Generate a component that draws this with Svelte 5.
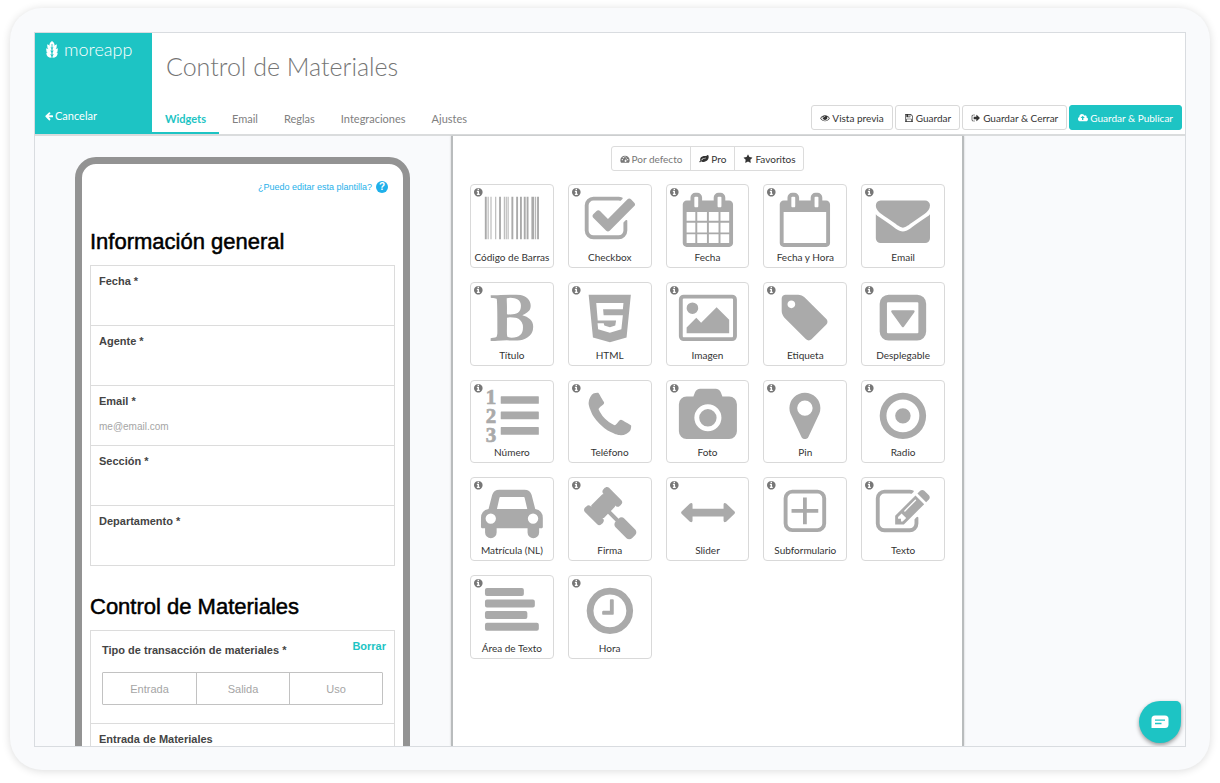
<script>
  const tabs = ['Widgets', 'Email', 'Reglas', 'Integraciones', 'Ajustes'];
  let activeTab = $state('Widgets');

  const glyphs = {
    eye: 'M1664 960q-152-236-381-353 61 104 61 225 0 185-131.5 316.5t-316.5 131.5-316.5-131.5-131.5-316.5q0-121 61-225-229 117-381 353 133 205 333.5 326.5t434.5 121.5 434.5-121.5 333.5-326.5zm-720-384q0-20-14-34t-34-14q-125 0-214.5 89.5t-89.5 214.5q0 20 14 34t34 14 34-14 14-34q0-86 61-147t147-61q20 0 34-14t14-34zm848 384q0 34-20 69-140 230-376.5 368.5t-499.5 138.5-499.5-139-376.5-368q-20-35-20-69t20-69q140-229 376.5-368t499.5-139 499.5 139 376.5 368q20 35 20 69z',
    save: 'M512 1536h768v-384h-768v384zm896 0h128v-896q0-14-10-38.5t-20-34.5l-281-281q-10-10-34-20t-39-10v416q0 40-28 68t-68 28h-576q-40 0-68-28t-28-68v-416h-128v1280h128v-416q0-40 28-68t68-28h832q40 0 68 28t28 68v416zm-384-928v-320q0-13-9.5-22.5t-22.5-9.5h-192q-13 0-22.5 9.5t-9.5 22.5v320q0 13 9.5 22.5t22.5 9.5h192q13 0 22.5-9.5t9.5-22.5zm640 32v928q0 40-28 68t-68 28h-1344q-40 0-68-28t-28-68v-1344q0-40 28-68t68-28h928q40 0 88 20t76 48l280 280q28 28 48 76t20 88z',
    exit: 'M704 1440q0 4 1 20t.5 26.5-3 23.5-10 19.5-20.5 6.5h-320q-119 0-203.5-84.5t-84.5-203.5v-704q0-119 84.5-203.5t203.5-84.5h320q13 0 22.5 9.5t9.5 22.5q0 4 1 20t.5 26.5-3 23.5-10 19.5-20.5 6.5h-320q-66 0-113 47t-47 113v704q0 66 47 113t113 47h312l11.5 1 11.5 3 8 5.5 7 9 2 13.5zm928-544q0 26-19 45l-544 544q-19 19-45 19t-45-19-19-45v-288h-448q-26 0-45-19t-19-45v-384q0-26 19-45t45-19h448v-288q0-26 19-45t45-19 45 19l544 544q19 19 19 45z',
    cloud: 'M1216 864q0-14-9-23l-352-352q-9-9-23-9t-23 9l-351 351q-10 12-10 24 0 14 9 23t23 9h224v352q0 13 9.5 22.5t22.5 9.5h192q13 0 22.5-9.5t9.5-22.5v-352h224q13 0 22.5-9.5t9.5-22.5zm640 288q0 159-112.5 271.5t-271.5 112.5h-1088q-185 0-316.5-131.5t-131.5-316.5q0-130 70-240t188-165q-2-30-2-43 0-212 150-362t362-150q156 0 285.5 87t188.5 231q71-62 166-62 106 0 181 75t75 181q0 76-41 138 130 31 213.5 135.5t83.5 238.5z',
    star: 'M1728 647q0 22-26 48l-363 354 86 500q1 7 1 20 0 21-10.5 35.5t-30.5 14.5q-19 0-40-12l-449-236-449 236q-22 12-40 12-21 0-31.5-14.5t-10.5-35.5q0-6 2-20l86-500-364-354q-25-27-25-48 0-37 56-46l502-73 225-455q19-41 49-41t49 41l225 455 502 73q56 9 56 46z',
    back: 'M1664 896v128q0 53-32.5 90.5t-84.5 37.5h-704l293 294q38 36 38 90t-38 90l-75 76q-37 37-90 37-52 0-91-37l-651-652q-37-37-37-90 0-52 37-91l651-650q38-38 91-38 52 0 90 38l75 74q38 38 38 91t-38 91l-293 293h704q52 0 84.5 37.5t32.5 90.5z',
    leaf: 'M1280 704q0-26-19-45t-45-19q-172 0-318 49.5t-259.5 134-235.5 219.5q-19 21-19 45 0 26 19 45t45 19q24 0 45-19 27-24 74-71t67-66q137-124 268.5-176t313.5-52q26 0 45-19t19-45zm512-198q0 95-20 193-46 224-184.5 383t-357.5 268q-214 108-438 108-148 0-286-47-15-5-88-42t-96-37q-16 0-39.5 32t-45 70-52.5 70-60 32q-43 0-63.5-17.5t-45.5-59.5q-2-4-6-11t-5.5-10-3-9.5-1.5-13.5q0-35 31-73.5t68-65.5 68-56 31-48q0-4-14-38t-16-44q-9-51-9-104 0-115 43.5-220t119-184.5 170.5-139 204-95.5q55-18 145-25.5t179.5-9 178.5-6 163.5-24 113.5-56.5l29.5-29.5 29.5-28 27-20 36.5-16 43.5-4.5q39 0 70.5 46t47.5 112 24 124 8 96z',
    gauge: 'M0 1152a896 896 0 0 1 1792 0q0 250-130 450-20 30-60 30H190q-40 0-60-30Q0 1402 0 1152zM256 1024a128 128 0 1 0 256 0a128 128 0 1 0-256 0zM448 640a128 128 0 1 0 256 0a128 128 0 1 0-256 0zM768 480a128 128 0 1 0 256 0a128 128 0 1 0-256 0zM1280 1024a128 128 0 1 0 256 0a128 128 0 1 0-256 0zM1130 600l-130 480a190 190 0 1 0 95 25l130-480z',
    info: 'M1152 1376v-160q0-14-9-23t-23-9h-96v-512q0-14-9-23t-23-9h-320q-14 0-23 9t-9 23v160q0 14 9 23t23 9h96v320h-96q-14 0-23 9t-9 23v160q0 14 9 23t23 9h448q14 0 23-9t9-23zm-128-896v-160q0-14-9-23t-23-9h-192q-14 0-23 9t-9 23v160q0 14 9 23t23 9h192q14 0 23-9t9-23zm640 416q0 209-103 385.5t-279.5 279.5-385.5 103-385.5-103-279.5-279.5-103-385.5 103-385.5 279.5-279.5 385.5-103 385.5 103 279.5 279.5 103 385.5z'
  };

  const calendarFrame =
    'M576 448v-288q0-13-9.5-22.5t-22.5-9.5h-64q-13 0-22.5 9.5t-9.5 22.5v288q0 13 9.5 22.5t22.5 9.5h64q13 0 22.5-9.5t9.5-22.5zM1344 448v-288q0-13-9.5-22.5t-22.5-9.5h-64q-13 0-22.5 9.5t-9.5 22.5v288q0 13 9.5 22.5t22.5 9.5h64q13 0 22.5-9.5t9.5-22.5zM1728 384v1280q0 52-38 90t-90 38h-1408q-52 0-90-38t-38-90v-1280q0-52 38-90t90-38h128v-96q0-66 47-113t113-47h64q66 0 113 47t47 113v96h384v-96q0-66 47-113t113-47h64q66 0 113 47t47 113v96h128q52 0 90 38t38 90z';

  // "glyph" paths use the 1792-unit icon grid, "shape" paths the 84-unit tile grid.
  const widgets = [
    { name: 'Código de Barras', glyph: 'M63 1536h-63v-1408h63v1408zM126 1535h-32v-1407h31v1407zM220 1535h-31v-1407h31v1407zM377 1535h-31v-1407h31v1407zM534 1535h-62v-1407h62v1407zM660 1535h-31v-1407h31v1407zM723 1535h-31v-1407h31v1407zM786 1535h-31v-1407h31v1407zM943 1535h-63v-1407h63v1407zM1100 1535h-63v-1407h63v1407zM1226 1535h-63v-1407h63v1407zM1352 1535h-63v-1407h63v1407zM1446 1535h-63v-1407h63v1407zM1635 1535h-94v-1407h94v1407zM1698 1535h-32v-1407h32v1407zM1792 1535h-63v-1407h63v1407z' },
    { name: 'Checkbox', glyph: 'M1472 930v318q0 119-84.5 203.5t-203.5 84.5h-832q-119 0-203.5-84.5t-84.5-203.5v-832q0-119 84.5-203.5t203.5-84.5h832q63 0 117 25 15 7 18 23 3 17-9 29l-49 49q-10 10-23 10-3 0-9-2-23-6-45-6h-832q-66 0-113 47t-47 113v832q0 66 47 113t113 47h832q66 0 113-47t47-113v-254q0-13 9-22l64-64q10-10 23-10 6 0 12 3 20 8 20 29zm231-489l-814 814q-24 24-57 24t-57-24l-430-430q-24-24-24-57t24-57l110-110q24-24 57-24t57 24l263 263 647-647q24-24 57-24t57 24l110 110q24 24 24 57t-24 57z' },
    { name: 'Fecha', glyph: 'M192 1664h288v-288h-288v288zM544 1664h320v-288h-320v288zM192 1312h288v-320h-288v320zM544 1312h320v-320h-320v320zM192 928h288v-288h-288v288zM928 1664h320v-288h-320v288zM544 928h320v-288h-320v288zM1312 1664h288v-288h-288v288zM928 1312h320v-320h-320v320zM1312 1312h288v-320h-288v320zM928 928h320v-288h-320v288zM1312 928h288v-288h-288v288z' + calendarFrame },
    { name: 'Fecha y Hora', glyph: 'M192 1664h1408v-1024h-1408v1024z' + calendarFrame },
    { name: 'Email', glyph: 'M1792 710v794q0 66-47 113t-113 47h-1472q-66 0-113-47t-47-113v-794q44 49 101 87 362 246 497 345 57 42 92.5 65.5t94.5 48 110 24.5h2q51 0 110-24.5t94.5-48 92.5-65.5q170-123 498-345 57-39 100-87zm0-294q0 79-49 151t-122 123q-376 261-468 325-10 7-42.5 31t-54 38.5-52 32.5-57.5 27-50 9h-2q-23 0-50-9t-57.5-27-52-32.5-54-38.5-42.5-31q-91-64-262-182.5t-205-142.5q-62-42-117-115.5t-55-136.5q0-78 41.5-130t118.5-52h1472q65 0 112.5 47t47.5 113z' },
    { name: 'Título', glyph: 'M747 1521q74 32 140 32 376 0 376-335 0-114-41-180-27-44-61.5-74t-67.5-46.5-80.5-25-84-10.5-94.5-2q-73 0-101 10 0 53-.5 159t-.5 158q0 8-1 67.5t-.5 96.5 4.5 83.5 12 66.5zm-14-746q42 7 109 7 82 0 143-13t110-44.5 74.5-89.5 25.5-142q0-70-29-122.5t-79-82-108-43.5-124-14q-50 0-130 13 0 50 4 151t4 152q0 27-.5 80t-.5 79q0 46 1 69zm-541 889l2-94q15-4 85-16t106-27q7-12 12.5-27t8.5-33.5 5.5-32.5 3-37.5.5-34v-65.5q0-982-22-1025-4-8-22-14.5t-44.5-11-49.5-7-48.5-4.5-30.5-3l-4-83q98-2 340-11.5t373-9.5q23 0 68 .5t68 .5q70 0 136.5 13t128.5 42 108 71 74 104.5 28 137.5q0 52-16.5 95.5t-39 72-64.5 57.5-73 45-84 40q154 35 256.5 134t102.5 248q0 100-35 179.5t-93.5 130.5-138 85.5-163.5 48.5-176 14q-44 0-132-3t-132-3q-106 0-307 11t-231 12z' },
    { name: 'HTML', shape: 'M20.7 12.7H63L58.7 55.7L42 60.3L25 55.7ZM28.3 21L29.8 38.6H48.2L47.4 43.7L42 45.3L36.4 43.7L35.8 41.300H29.6L30.2 47.3L42 51L53.5 47.3L55 33.3H35.7L35.2 27.3H55L55.6 21Z' },
    { name: 'Imagen', glyph: 'M576 576q0 80-56 136t-136 56-136-56-56-136 56-136 136-56 136 56 56 136zm1024 384v448h-1408v-192l320-320 160 160 512-512zm96-704h-1600q-13 0-22.5 9.5t-9.5 22.5v1216q0 13 9.5 22.5t22.5 9.5h1600q13 0 22.5-9.5t9.5-22.5v-1216q0-13-9.5-22.5t-22.5-9.5zm160 32v1216q0 66-47 113t-113 47h-1600q-66 0-113-47t-47-113v-1216q0-66 47-113t113-47h1600q66 0 113 47t47 113z' },
    { name: 'Etiqueta', glyph: 'M576 448q0-53-37.5-90.5t-90.5-37.5-90.5 37.5-37.5 90.5 37.5 90.5 90.5 37.5 90.5-37.5 37.5-90.5zm1067 576q0 53-37 90l-491 492q-39 37-91 37-53 0-90-37l-715-716q-38-37-64.5-101t-26.5-117v-416q0-52 38-90t90-38h416q53 0 117 26.5t102 64.5l715 714q37 39 37 91z' },
    { name: 'Desplegable', shape: 'M27.700 12.700H56.300A9 9 0 0 1 65.300 21.700V49.700A9 9 0 0 1 56.300 58.700H27.700A9 9 0 0 1 18.700 49.700V21.700A9 9 0 0 1 27.700 12.700ZM27 20.300Q26 20.300 26 21.300V50.300Q26 51.300 27 51.300H56.500Q57.500 51.300 57.500 50.300V21.300Q57.500 20.300 56.500 20.300ZM31.500 28.200H52.500Q54.600 28.400 53.300 30.500L43 44.800Q42 46 41 44.800L30.700 30.500Q29.400 28.400 31.500 28.200Z' },
    { name: 'Número', shape: 'M31.400 16.200H68.400Q69 16.200 69 16.800V23.300Q69 23.900 68.400 23.900H31.400Q30.800 23.900 30.800 23.300V16.800Q30.800 16.200 31.400 16.200ZM31.400 31.700H68.400Q69 31.700 69 32.300V38.800Q69 39.400 68.400 39.400H31.400Q30.800 39.400 30.800 38.800V32.300Q30.800 31.700 31.400 31.700ZM31.400 47.200H68.400Q69 47.200 69 47.800V54.300Q69 54.900 68.400 54.900H31.400Q30.800 54.900 30.800 54.300V47.800Q30.800 47.200 31.400 47.200Z', digits: true },
    { name: 'Teléfono', glyph: 'M1600 1240q0 27-10 70.5t-21 68.5q-21 50-122 106-94 51-186 51-27 0-53-3.5t-57.5-12.5-47-14.5-55.5-20.5-49-18q-98-35-175-83-127-79-264-216t-216-264q-48-77-83-175-3-9-18-49t-20.5-55.5-14.5-47-12.5-57.5-3.5-53q0-92 51-186 56-101 106-122 25-11 68.5-21t70.5-10q14 0 21 3 18 6 53 76 11 19 30 54t35 63.5 31 53.5q3 4 17.5 25t21.5 35.5 7 28.5q0 20-28.5 50t-62 55-62 53-28.5 46q0 9 5 22.5t8.5 20.5 14 24 11.5 19q76 137 174 235t235 174q2 1 19 11.5t24 14 20.5 8.5 22.5 5q18 0 46-28.5t53-62 55-62 50-28.5q14 0 28.5 7t35.5 21.5 25 17.5q25 15 53.5 31t63.5 35 54 30q70 35 76 53 3 7 3 21z' },
    { name: 'Foto', glyph: 'M896 672q119 0 203.5 84.5t84.5 203.5-84.5 203.5-203.5 84.500-203.500-84.500-84.500-203.500 84.500-203.500 203.500-84.500zm704-416q106 0 181 75t75 181v896q0 106-75 181t-181 75h-1408q-106 0-181-75t-75-181v-896q0-106 75-181t181-75h224l51-136q19-49 69.500-84.500t103.500-35.500h512q53 0 103.500 35.500t69.500 84.500l51 136h224zm-704 1152q185 0 316.500-131.500t131.500-316.500-131.500-316.500-316.500-131.500-316.500 131.500-131.500 316.500 131.500 316.500 316.500 131.500z' },
    { name: 'Pin', glyph: 'M1152 640q0-106-75-181t-181-75-181 75-75 181 75 181 181 75 181-75 75-181zm256 0q0 109-33 179l-364 774q-16 33-47.500 52t-67.500 19-67.500-19-46.500-52l-365-774q-33-70-33-179 0-212 150-362t362-150 362 150 150 362z' },
    { name: 'Radio', glyph: 'M128 896a768 768 0 1 0 1536 0a768 768 0 1 0-1536 0zM352 896a544 544 0 1 0 1088 0a544 544 0 1 0-1088 0zM640 896a256 256 0 1 0 512 0a256 256 0 1 0-512 0z' },
    { name: 'Matrícula (NL)', shape: 'M18.600 32L22.200 18Q23.800 12.800 29.500 12.800H54.500Q60.200 12.800 61.800 18L65.400 32Q73 33.500 73 41V50.200Q73 51.300 72 51.300H69.300V55.600A5.800 5.800 0 0 1 57.700 55.600V51.300H26.700V55.600A5.800 5.800 0 0 1 15.100 55.600V51.300H12Q11 51.300 11 50.200V41Q11 33.500 18.600 32ZM29.600 20.500L27 32H57.400L54.700 20.500Q54.500 20 54 20H30.300Q29.800 20 29.600 20.500ZM15.600 41.700a5.200 5.200 0 1 0 10.400 0a5.200 5.200 0 1 0-10.400 0ZM58 41.700a5.200 5.200 0 1 0 10.400 0a5.200 5.200 0 1 0-10.400 0Z' },
    { name: 'Firma', glyph: 'M1771 1536q0 53-37 90l-107 108q-39 37-91 37-53 0-90-37l-363-364q-38-36-38-90 0-53 43-96l-256-256-126 126q-14 14-34 14t-34-14q2 2 12.500 12t12.500 13 10 11.500 10 13.500 6 13.500 5.500 16.500 1.500 18q0 38-28 68-3 3-16.500 18t-19 20.500-18.500 16.500-22 15.500-22 9-26 4.500q-40 0-68-28l-408-408q-28-28-28-68 0-13 4.500-26t9-22 15.500-22 16.500-18.500 20.500-19 18-16.500q30-28 68-28 10 0 18 1.500t16.500 5.500 13.500 6 13.500 10 11.500 10 13 12.500 12 12.500q-14-14-14-34t14-34l348-348q14-14 34-14t34 14q-2-2-12.500-12t-12.500-13-10-11.500-10-13.500-6-13.500-5.500-16.500-1.500-18q0-38 28-68 3-3 16.500-18t19-20.500 18.500-16.500 22-15.500 22-9 26-4.500q40 0 68 28l408 408q28 28 28 68 0 13-4.500 26t-9 22-15.500 22-16.500 18.500-20.500 19-18 16.500q-30 28-68 28-10 0-18-1.500t-16.500-5.500-13.500-6-13.500-10-11.500-10-13-12.500-12-12.500q14 14 14 34t-14 34l-126 126 256 256q43-43 96-43 52 0 91 37l363 363q37 39 37 91z' },
    { name: 'Slider', shape: 'M15.600 34.600L24 26.500Q26.400 25.300 26.600 27.500V31.800H57.700V27.500Q58 25.300 60.300 26.500L68.700 34.600Q69.600 35.700 68.700 36.800L60.300 44.900Q58 46.100 57.700 43.900V39.600H26.600V43.900Q26.400 46.100 24 44.900L15.600 36.800Q14.700 35.700 15.600 34.600Z' },
    { name: 'Subformulario', shape: 'M29.400 12.700H54.600A8.700 8.700 0 0 1 63.300 21.400V46.500A8.700 8.700 0 0 1 54.600 55.200H29.400A8.700 8.700 0 0 1 20.700 46.500V21.400A8.700 8.700 0 0 1 29.400 12.700ZM29.400 16.600A4.800 4.800 0 0 0 24.600 21.400V46.500A4.800 4.800 0 0 0 29.400 51.300H54.600A4.800 4.800 0 0 0 59.400 46.500V21.400A4.800 4.800 0 0 0 54.600 16.600ZM40.100 20.600H43.900V32H55.400V35.900H43.900V47.400H40.100V35.900H28.600V32H40.100Z' },
    { name: 'Texto', glyph: 'M888 1184l116-116-152-152-116 116v56h96v96h56zm440-720q-16-16-33 1l-350 350q-17 17-1 33t33-1l350-350q17-17 1-33zm80 594v190q0 119-84.500 203.500t-203.500 84.500h-832q-119 0-203.500-84.500t-84.500-203.500v-832q0-119 84.500-203.500t203.500-84.500h832q63 0 117 25 15 7 18 23 3 17-9 29l-49 49q-14 14-32 8-23-6-45-6h-832q-66 0-113 47t-47 113v832q0 66 47 113t113 47h832q66 0 113-47t47-113v-126q0-13 9-22l64-64q15-15 35-7t20 29zm-96-738l288 288-672 672h-288v-288zm444 132l-92 92-288-288 92-92q28-28 68-28t68 28l152 152q28 28 28 68t-28 68z' },
    { name: 'Área de Texto', shape: 'M17 13h35q2 0 2 2v4q0 2-2 2h-35q-2 0-2-2v-4q0-2 2-2ZM17 24.600h46q2 0 2 2v4q0 2-2 2h-46q-2 0-2-2v-4q0-2 2-2ZM17 36.200h38.500q2 0 2 2v4q0 2-2 2h-38.500q-2 0-2-2v-4q0-2 2-2ZM17 47.800h50q2 0 2 2v4q0 2-2 2h-50q-2 0-2-2v-4q0-2 2-2Z' },
    { name: 'Hora', glyph: 'M1024 544v448q0 14-9 23t-23 9h-320q-14 0-23-9t-9-23v-64q0-14 9-23t23-9h224v-352q0-14 9-23t23-9h64q14 0 23 9t9 23zm416 352q0-148-73-273t-198-198-273-73-273 73-198 198-73 273 73 273 198 198 273 73 273-73 198-198 73-273zm224 0q0 209-103 385.500t-279.500 279.500-385.500 103-385.500-103-279.500-279.500-103-385.500 103-385.500 279.500-279.500 385.500-103 385.500 103 279.500 279.500 103 385.500z' }
  ];

  const fields = [
    { id: 'fecha', label: 'Fecha *' },
    { id: 'agente', label: 'Agente *' },
    { id: 'email', label: 'Email *', hint: 'me@email.com' },
    { id: 'seccion', label: 'Sección *' },
    { id: 'departamento', label: 'Departamento *' }
  ];
  const choices = ['Entrada', 'Salida', 'Uso'];
  let choice = $state('');
</script>

{#snippet icon(name)}
  <svg class="icon" viewBox="-64 0 1920 1792" aria-hidden="true"><path fill-rule="evenodd" d={glyphs[name]} /></svg>
{/snippet}

<div class="page">
  <div class="card">
    <div class="frame">
      <header>
        <div class="brand">
          <a class="logo" href="#inicio">
            <svg viewBox="0 0 12 17" aria-hidden="true">
              <path d="M6 0Q9.500 2.400 8.200 5L6.400 6.800V3H5.600V6.800L3.800 5Q2.500 2.400 6 0ZM1.300 3.200Q5.600 5 5.600 9.800Q.6 9 1.300 3.200ZM10.700 3.200Q6.400 5 6.400 9.800Q11.400 9 10.700 3.200ZM.3 7.200Q5.600 8.600 5.600 13.500Q-.5 13 .3 7.200ZM11.700 7.200Q6.400 8.600 6.400 13.500Q12.500 13 11.700 7.200ZM.3 11.700Q5.400 12.300 5.600 16.800Q.4 16.800 .3 11.700ZM11.700 11.700Q6.600 12.300 6.400 16.800Q11.600 16.800 11.700 11.700Z" />
            </svg>
            <span>moreapp</span>
          </a>
          <a class="cancel" href="#formularios">{@render icon('back')}Cancelar</a>
        </div>
        <div class="heading">
          <h1>Control de Materiales</h1>
          <div class="bar">
            <nav>
              {#each tabs as tab}
                <button class="tab" class:active={tab === activeTab} onclick={() => (activeTab = tab)}>{tab}</button>
              {/each}
            </nav>
            <div class="actions">
              <button class="btn">{@render icon('eye')}Vista previa</button>
              <button class="btn">{@render icon('save')}Guardar</button>
              <button class="btn">{@render icon('exit')}Guardar &amp; Cerrar</button>
              <button class="btn primary">{@render icon('cloud')}Guardar &amp; Publicar</button>
            </div>
          </div>
        </div>
      </header>

      <div class="work">
        <section class="preview">
          <div class="phone">
            <a class="help" href="#ayuda">
              ¿Puedo editar esta plantilla?
              <span class="q">?</span>
            </a>
            <h2>Información general</h2>
            <div class="group">
              {#each fields as f}
                <div class="field">
                  <label for={f.id}>{f.label}</label>
                  <input id={f.id} type="text" placeholder={f.hint} />
                </div>
              {/each}
            </div>
            <h2>Control de Materiales</h2>
            <div class="group">
              <div class="choice">
                <div class="choice-head">
                  <span id="tipo">Tipo de transacción de materiales *</span>
                  <button class="clear" onclick={() => (choice = '')}>Borrar</button>
                </div>
                <div class="segments" role="group" aria-labelledby="tipo">
                  {#each choices as c}
                    <button aria-pressed={choice === c} onclick={() => (choice = c)}>{c}</button>
                  {/each}
                </div>
              </div>
              <div class="field">
                <label for="entrada">Entrada de Materiales</label>
                <input id="entrada" type="text" />
              </div>
            </div>
          </div>
        </section>

        <section class="panel">
          <div class="filters">
            <button class="muted">{@render icon('gauge')}Por defecto</button>
            <button>{@render icon('leaf')}Pro</button>
            <button>{@render icon('star')}Favoritos</button>
          </div>
          <div class="tiles">
            {#each widgets as w}
              <button class="tile">
                <svg viewBox="0 0 84 66" aria-hidden="true">
                  <path class="info" fill-rule="evenodd" transform="translate(3.300 3.200) scale(.0056)" d={glyphs.info} />
                  {#if w.glyph}
                    <path fill-rule="evenodd" transform="translate(14.850 8.800) scale(.0303)" d={w.glyph} />
                  {:else}
                    <path fill-rule="evenodd" d={w.shape} />
                  {/if}
                  {#if w.digits}
                    <text x="21" y="24">1</text>
                    <text x="21" y="43">2</text>
                    <text x="21" y="62">3</text>
                  {/if}
                </svg>
                <span>{w.name}</span>
              </button>
            {/each}
          </div>
        </section>

        <aside>
          <button class="chat" aria-label="Chat">
            <svg viewBox="0 0 18 14" aria-hidden="true">
              <path fill="#fff" d="M4 .5H14Q17.500 .5 17.500 4V9.500Q17.500 13 14 13H.5V4Q.5 .5 4 .5Z" />
              <path stroke="#1dc4c4" stroke-width="1.300" d="M4 5.200H14M4 8.500H10.500" />
            </svg>
          </button>
        </aside>
      </div>
    </div>
  </div>
</div>

<style>
  :global(body) { margin: 0; background: #fff; }
  * { box-sizing: border-box; }
  button, input { font: inherit; color: inherit; background: none; border: 0; padding: 0; margin: 0; }
  button { cursor: pointer; white-space: nowrap; }
  a { text-decoration: none; }

  .page { height: 100vh; padding: 8px 10px 13px; font-family: Lato, sans-serif; color: #333; }
  .card {
    height: 100%; padding: 24px 24px 23px; border-radius: 32px;
    background: #f9fafc; box-shadow: 0 1px 8px rgba(0, 0, 0, 0.14);
  }
  .frame { height: 100%; display: flex; flex-direction: column; border: 1px solid #d9dce0; overflow: hidden; }

  header { display: flex; background: #fff; border-bottom: 2px solid #dadcdd; }
  .brand {
    width: 117px; height: 101px; padding: 7px 9px 10px 11px;
    display: flex; flex-direction: column; justify-content: space-between; background: #1dc4c4;
  }
  .brand a { color: #fff; display: flex; align-items: center; }
  .logo { gap: 6px; font-size: 18px; line-height: 18px; font-weight: 300; }
  .logo svg { width: 12px; height: 17px; fill: #fff; }
  .cancel { gap: 1px; font-size: 11px; line-height: 16px; margin-left: -2px; }
  .icon { width: 10px; height: 10px; fill: currentColor; flex: none; }

  .heading { flex: 1; min-width: 0; display: flex; flex-direction: column; justify-content: space-between; }
  h1 { margin: 16px 0 0 14px; font-size: 25px; line-height: 34px; font-weight: 300; color: #757575; }
  .bar { display: flex; justify-content: space-between; align-items: flex-end; }
  nav { display: flex; }
  .tab { height: 29px; padding: 0 13px; font-size: 11px; border-bottom: 2px solid transparent; color: #808080; }
  .tab.active { color: #1dc4c4; border-color: #1dc4c4; font-weight: 700; }
  .actions { display: flex; gap: 2px; padding: 0 3px 4px 0; }
  .btn {
    display: flex; align-items: center; gap: 2px; height: 25px; padding: 0 8px;
    border: 1px solid #d9d9d9; border-radius: 3px; background: #fff; font-size: 10px;
  }
  .primary { background: #1dc4c4; border-color: #1dc4c4; color: #fff; }

  .work { flex: 1; min-height: 0; display: grid; grid-template-columns: 416fr 513fr 221fr; }

  .preview { padding: 21px 41px 0 40px; overflow: hidden; font-family: "Liberation Sans", Arial, sans-serif; }
  .phone {
    min-height: 900px; padding: 16px 8px; border: 7px solid #939393; border-radius: 21px;
    background: #fff; display: flex; flex-direction: column;
  }
  .help { align-self: flex-end; display: flex; align-items: center; gap: 4px; margin-right: 7px; font-size: 9px; line-height: 14px; color: #1fb0ea; }
  .q {
    width: 12px; height: 12px; border-radius: 50%; background: #1fb0ea; color: #fff;
    font-size: 10px; line-height: 12px; font-weight: 700; text-align: center;
  }
  h2 { margin: 36px 0 11px; font-size: 22px; line-height: 24px; font-weight: 400; color: #000; -webkit-text-stroke: 0.500px #000; }
  .group { border: 1px solid #dcdcdc; }
  .field { height: 60px; padding: 8px; }
  .field:first-child { height: 59px; }
  .field + .field, .choice + .field { border-top: 1px solid #dcdcdc; }
  label { display: block; font-size: 11px; line-height: 14px; font-weight: 700; color: #444; }
  .field input { display: block; width: 100%; margin-top: 10px; height: 16px; font-size: 10px; outline: none; }
  .field input::placeholder { color: #a5a5a5; opacity: 1; }
  .group + h2 { margin-top: 29px; }
  .choice { padding: 8px 8px 18px 11px; }
  .choice-head { display: flex; justify-content: space-between; align-items: flex-start; font-size: 11px; line-height: 14px; font-weight: 700; }
  .choice-head span { padding-top: 4px; color: #444; }
  .clear { color: #1dc4c4; }
  .segments { display: grid; grid-template-columns: repeat(3, 1fr); margin: 15px 3px 0 0; border: 1px solid #c2c2c2; border-radius: 1px; }
  .segments button { height: 31px; font-size: 11px; color: #a5a5a5; }
  .segments button + button { border-left: 1px solid #c2c2c2; }

  .panel {
    padding: 10px 17px; background: #fff; border: solid #b9bcbd; border-width: 0 2px;
    box-shadow: 0 0 2px rgba(0, 0, 0, 0.2); overflow: hidden;
  }
  .filters { display: flex; justify-content: center; margin-bottom: 13px; }
  .filters button {
    display: flex; align-items: center; gap: 2px; height: 25px; padding: 0 8px;
    border: 1px solid #dcdcdc; font-size: 10px;
  }
  .filters button + button { margin-left: -1px; }
  .filters button:first-child { border-radius: 3px 0 0 3px; }
  .filters button:last-child { border-radius: 0 3px 3px 0; }
  .filters .muted { color: #777; }
  .tiles { display: grid; grid-template-columns: repeat(5, 1fr); gap: 14px; }
  .tile {
    display: flex; flex-direction: column; align-items: center; aspect-ratio: 1; min-width: 0;
    border: 1px solid #d9d9d9; border-radius: 4px; font-size: 10px; line-height: 14px;
  }
  .tile svg { width: calc(100% + 2px); margin: -1px -1px 0; flex: none; fill: #aaa; display: block; }
  .tile .info { fill: #777; }
  .tile text { font: 700 21px "Liberation Serif", serif; text-anchor: middle; stroke: #aaa; stroke-width: 0.700px; }

  aside { display: flex; justify-content: flex-end; align-items: flex-end; padding: 0 4px 3px 0; }
  .chat {
    width: 42px; height: 42px; display: grid; place-items: center; border-radius: 50% 5px 50% 50%;
    background: #1dc4c4; box-shadow: 0 2px 4px rgba(0, 0, 0, 0.4);
  }
  .chat svg { width: 18px; height: 14px; }
</style>
